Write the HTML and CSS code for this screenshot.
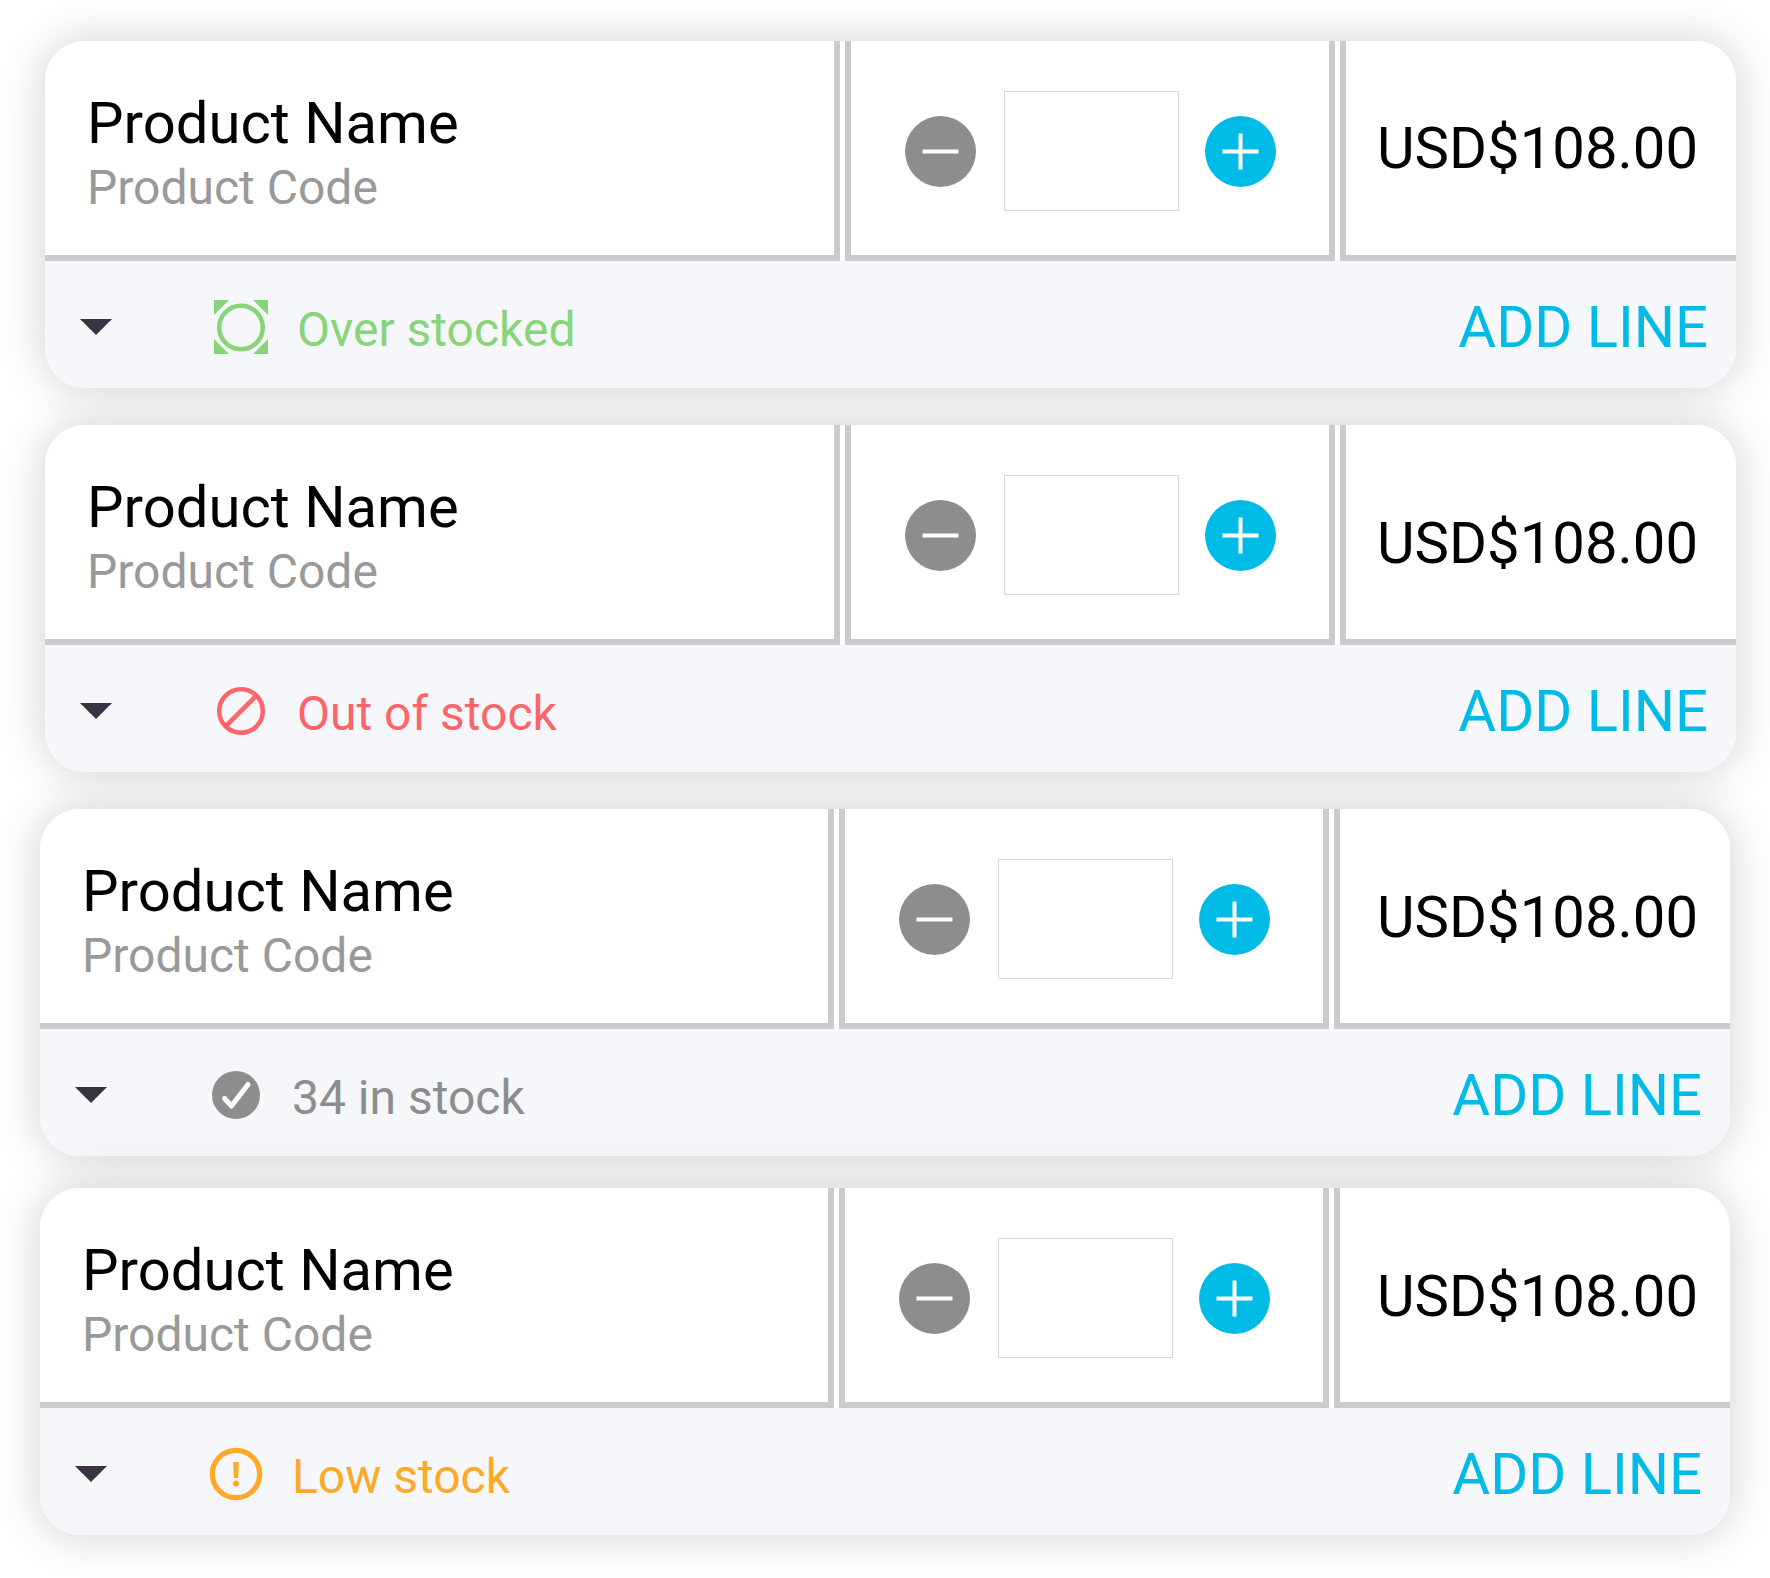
FILE: index.html
```html
<!DOCTYPE html>
<html lang="en">
<head>
  <meta charset="UTF-8">
  <meta name="viewport" content="width=device-width, initial-scale=1.0">
  <title>Products</title>
  <link rel="stylesheet" href="styles.css">
</head>
<body>
  <main class="product-list">
    <section class="group">
      <article class="card">
        <div class="cells">
          <div class="cell info">
            <div class="name">Product Name</div>
            <div class="code">Product Code</div>
          </div>
          <div class="cell quantity">
            <button type="button" class="step minus" aria-label="Decrease">
              <svg viewBox="0 0 71 71"><path d="M17.500 35.500H53.500"/></svg>
            </button>
            <input type="text" class="qty" aria-label="Quantity">
            <button type="button" class="step plus" aria-label="Increase">
              <svg viewBox="0 0 71 71"><path d="M17.500 35.500H53.500M35.500 17.500V53.500"/></svg>
            </button>
          </div>
          <div class="cell price">USD$108.00</div>
        </div>
        <div class="footer">
          <button type="button" class="toggle" aria-label="Show details">
            <svg viewBox="0 0 32 16"><path d="M0 0H32L16 16Z"/></svg>
          </button>
          <div class="stock over">
            <svg viewBox="0 0 54 54">
              <circle cx="27" cy="27.500" r="21.800" fill="none" stroke="currentColor" stroke-width="4.500"/>
              <path fill="currentColor" d="M0 0H15L0 15ZM54 0V15L39 0ZM0 54V39L15 54ZM54 54H39L54 39Z"/>
            </svg>
            <span>Over stocked</span>
          </div>
          <button type="button" class="add">ADD LINE</button>
        </div>
      </article>

      <article class="card">
        <div class="cells">
          <div class="cell info">
            <div class="name">Product Name</div>
            <div class="code">Product Code</div>
          </div>
          <div class="cell quantity">
            <button type="button" class="step minus" aria-label="Decrease">
              <svg viewBox="0 0 71 71"><path d="M17.500 35.500H53.500"/></svg>
            </button>
            <input type="text" class="qty" aria-label="Quantity">
            <button type="button" class="step plus" aria-label="Increase">
              <svg viewBox="0 0 71 71"><path d="M17.500 35.500H53.500M35.500 17.500V53.500"/></svg>
            </button>
          </div>
          <div class="cell price price-low">USD$108.00</div>
        </div>
        <div class="footer">
          <button type="button" class="toggle" aria-label="Show details">
            <svg viewBox="0 0 32 16"><path d="M0 0H32L16 16Z"/></svg>
          </button>
          <div class="stock out">
            <svg viewBox="0 0 54 54">
              <g fill="none" stroke="currentColor" stroke-width="4.500">
                <circle cx="27" cy="27" r="21.800"/>
                <path d="M11.600 42.400L42.400 11.600"/>
              </g>
            </svg>
            <span>Out of stock</span>
          </div>
          <button type="button" class="add">ADD LINE</button>
        </div>
      </article>
    </section>

    <section class="group group-left">
      <article class="card">
        <div class="cells">
          <div class="cell info">
            <div class="name">Product Name</div>
            <div class="code">Product Code</div>
          </div>
          <div class="cell quantity">
            <button type="button" class="step minus" aria-label="Decrease">
              <svg viewBox="0 0 71 71"><path d="M17.500 35.500H53.500"/></svg>
            </button>
            <input type="text" class="qty" aria-label="Quantity">
            <button type="button" class="step plus" aria-label="Increase">
              <svg viewBox="0 0 71 71"><path d="M17.500 35.500H53.500M35.500 17.500V53.500"/></svg>
            </button>
          </div>
          <div class="cell price">USD$108.00</div>
        </div>
        <div class="footer">
          <button type="button" class="toggle" aria-label="Show details">
            <svg viewBox="0 0 32 16"><path d="M0 0H32L16 16Z"/></svg>
          </button>
          <div class="stock in">
            <svg viewBox="0 0 54 54">
              <circle cx="27" cy="27" r="24" fill="currentColor"/>
              <path d="M15.500 30.500L22.500 38L39 16.500" fill="none" stroke="#fff" stroke-width="5" stroke-linecap="round" stroke-linejoin="round"/>
            </svg>
            <span>34 in stock</span>
          </div>
          <button type="button" class="add">ADD LINE</button>
        </div>
      </article>

      <article class="card">
        <div class="cells">
          <div class="cell info">
            <div class="name">Product Name</div>
            <div class="code">Product Code</div>
          </div>
          <div class="cell quantity">
            <button type="button" class="step minus" aria-label="Decrease">
              <svg viewBox="0 0 71 71"><path d="M17.500 35.500H53.500"/></svg>
            </button>
            <input type="text" class="qty" aria-label="Quantity">
            <button type="button" class="step plus" aria-label="Increase">
              <svg viewBox="0 0 71 71"><path d="M17.500 35.500H53.500M35.500 17.500V53.500"/></svg>
            </button>
          </div>
          <div class="cell price">USD$108.00</div>
        </div>
        <div class="footer">
          <button type="button" class="toggle" aria-label="Show details">
            <svg viewBox="0 0 32 16"><path d="M0 0H32L16 16Z"/></svg>
          </button>
          <div class="stock low">
            <svg viewBox="0 0 54 54">
              <circle cx="27" cy="27" r="23.700" fill="none" stroke="currentColor" stroke-width="5.200"/>
              <path fill="currentColor" d="M24.200 15H29.800L29.200 31H24.800Z"/>
              <circle cx="27" cy="36.500" r="2.900" fill="currentColor"/>
            </svg>
            <span>Low stock</span>
          </div>
          <button type="button" class="add">ADD LINE</button>
        </div>
      </article>
    </section>
  </main>
</body>
</html>
```

FILE: styles.css
```css
* {
  box-sizing: border-box;
}
body {
  margin: 0;
  background: #fff;
  color: #000;
  font-family: Roboto, "Liberation Sans", sans-serif;
}
button, input {
  font-family: inherit;
}
button {
  padding: 0;
  border: 0;
  background: none;
  cursor: pointer;
}
svg {
  display: block;
}
.product-list {
  display: flex;
  flex-direction: column;
  gap: 37px;
  padding: 41px 0 43px;
}
.group {
  display: flex;
  flex-direction: column;
  gap: 37px;
  padding: 0 34px 0 45px;
}
.group-left {
  gap: 32px;
  padding: 0 40px;
}
.card {
  border-radius: 40px;
  box-shadow: 0 0 46px rgba(0, 0, 0, 0.19);
}
.cells {
  display: grid;
  grid-template-columns: 1fr 490px 396px;
  gap: 5px;
  background: #fff;
  border-radius: 40px 40px 0 0;
}
.cell {
  height: 220px;
  border: 0 solid #cbcbcb;
  border-bottom-width: 6px;
}
.info {
  padding: 48px 42px 0;
  border-right-width: 6px;
}
.name {
  font-size: 58px;
  line-height: 68px;
}
.code {
  color: #999;
  font-size: 48px;
  line-height: 62px;
}
.quantity {
  display: flex;
  justify-content: center;
  align-items: center;
  gap: 26px;
  padding-top: 6px;
  border-left-width: 6px;
  border-right-width: 6px;
}
.step {
  width: 71px;
  height: 71px;
  border-radius: 50%;
}
.step path {
  stroke: #fff;
  stroke-width: 4;
}
.minus {
  margin-right: 2px;
  background: #8d8d8d;
}
.plus {
  background: #00bbe6;
}
.qty {
  width: 175px;
  height: 120px;
  border: 1px solid #d8d8d8;
  border-radius: 0;
  background: #fff;
  font-size: 58px;
  text-align: center;
}
.price {
  padding: 73px 0 0 31px;
  border-left-width: 6px;
  font-size: 58px;
  line-height: 68px;
}
.price-low {
  padding-top: 84px;
}
.group-left .price {
  padding: 74px 0 0 37px;
}
.footer {
  display: flex;
  align-items: center;
  height: 127px;
  padding: 4px 28px 0 35px;
  border-radius: 0 0 40px 40px;
  background: #f5f7fb;
}
.toggle svg {
  width: 32px;
  height: 16px;
  fill: #3a3341;
}
.stock {
  display: flex;
  align-items: center;
  gap: 29px;
  margin-left: 102px;
  font-size: 48px;
  line-height: 60px;
}
.stock svg {
  width: 54px;
  height: 54px;
}
.stock span {
  padding-top: 6px;
}
.over {
  color: #88d478;
}
.out {
  color: #ff6468;
}
.in {
  color: #8d8d8d;
}
.low {
  color: #ffa926;
}
.add {
  margin-left: auto;
  color: #00bbe6;
  font-size: 58px;
  line-height: 68px;
}
```
